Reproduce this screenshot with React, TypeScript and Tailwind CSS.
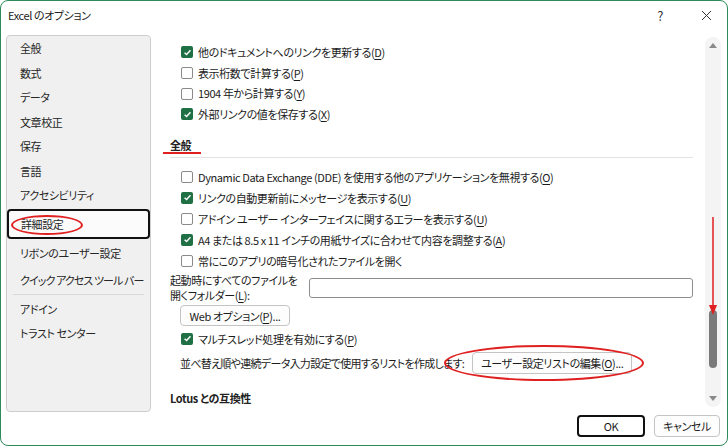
import { ReactNode } from 'react';

const font = "font-['Yu_Gothic_UI','Noto_Sans_CJK_JP',sans-serif] [font-feature-settings:'palt'] tracking-[-0.4px]";

const navTop = ['全般', '数式', 'データ', '文章校正', '保存', '言語', 'アクセシビリティ'];

function Check({ checked }: { checked?: boolean }) {
  if (checked) {
    return (
      <span className="w-[12px] h-[12px] rounded-[2px] bg-[#1f7145] flex items-center justify-center shrink-0">
        <svg width="9" height="9" viewBox="0 0 10 10">
          <path d="M1.8 5.2 L4 7.3 L8.3 2.6" stroke="white" strokeWidth="1.6" fill="none" />
        </svg>
      </span>
    );
  }
  return <span className="w-[12px] h-[12px] rounded-[2px] border border-[#8a8a8a] bg-white shrink-0" />;
}

function Row({ checked, children }: { checked?: boolean; children: ReactNode }) {
  return (
    <div className="h-[21px] flex items-center gap-[5px] pl-[11px]">
      <Check checked={checked} />
      <span className="whitespace-nowrap">{children}</span>
    </div>
  );
}

const U = ({ c }: { c: string }) => <span className="underline underline-offset-2">{c}</span>;

export default function App() {
  return (
    <div className={`w-[728px] h-[446px] bg-white border border-[#2f8a5a] rounded-[8px] overflow-hidden flex flex-col text-[11px] text-[#1b1b1b] ${font}`}>
      {/* Title bar */}
      <div className="h-[29px] flex items-center pl-[7px] shrink-0">
        <span className="text-[#222]">Excel のオプション</span>
        <span className="ml-auto mr-[38px] text-[13px] text-[#333]">?</span>
        <svg width="11" height="11" viewBox="0 0 11 11" className="mr-[15px]">
          <path d="M1 1 L10 10 M10 1 L1 10" stroke="#333" strokeWidth="1" />
        </svg>
      </div>

      <div className="flex flex-1 items-start">
        {/* Left nav */}
        <div className="ml-[5px] mt-[5px] w-[145px] h-[377px] bg-[#f0f0f0] border border-[#cdcdcd] rounded-[4px] flex flex-col text-[#262626] whitespace-nowrap relative">
          {navTop.map((n) => (
            <div key={n} className="h-[24.5px] flex items-center pl-[13px]">
              {n}
            </div>
          ))}
          <div className="h-[30px] mt-[1.5px] bg-[#fbfbfb] border-2 border-[#111] rounded-[4px] flex items-center pl-[12px] relative">
            詳細設定
            <span className="absolute left-[2px] top-[4px] w-[72px] h-[20px] border-2 border-[#e02020] rounded-[50%]" />
          </div>
          <div className="h-[28px] flex items-center pl-[13px]">リボンのユーザー設定</div>
          <div className="h-[27px] flex items-center pl-[13px] tracking-[-0.9px]">クイック アクセス ツール バー</div>
          <div className="mx-[6px] h-px bg-[#d9d9d9]" />
          <div className="h-[24px] mt-[2px] flex items-center pl-[13px]">アドイン</div>
          <div className="h-[24px] flex items-center pl-[13px]">トラスト センター</div>
        </div>

        {/* Right */}
        <div className="flex-1 flex flex-col">
          <div className="flex h-[372px] mt-[6px]">
            <div className="flex-1 pl-[19px] pr-[12px] flex flex-col pt-[6px] overflow-hidden">
              <Row checked>他のドキュメントへのリンクを更新する(<U c="D" />)</Row>
              <Row>表示桁数で計算する(<U c="P" />)</Row>
              <Row>1904 年から計算する(<U c="Y" />)</Row>
              <Row checked>外部リンクの値を保存する(<U c="X" />)</Row>

              <div className="h-[21px] mt-[10px] flex items-center relative font-bold text-[#222]">
                全般
                <span className="absolute left-[-7px] top-[17px] w-[38px] h-[2px] bg-[#e02020]" />
              </div>
              <div className="h-px bg-[#e3e3e3] mt-[2px]" />

              <div className="mt-[8px]">
                <Row>Dynamic Data Exchange (DDE) を使用する他のアプリケーションを無視する(<U c="O" />)</Row>
                <Row checked>リンクの自動更新前にメッセージを表示する(<U c="U" />)</Row>
                <Row>アドイン ユーザー インターフェイスに関するエラーを表示する(<U c="U" />)</Row>
                <Row checked>A4 または 8.5 x 11 インチの用紙サイズに合わせて内容を調整する(<U c="A" />)</Row>
                <Row>常にこのアプリの暗号化されたファイルを開く</Row>
              </div>

              <div className="h-[30px] mt-[2px] flex items-center">
                <div className="w-[139px] flex flex-col whitespace-nowrap">
                  <div className="h-[15px] leading-[15px]">起動時にすべてのファイルを</div>
                  <div className="h-[15px] leading-[15px]">
                    開くフォルダー(<U c="L" />):
                  </div>
                </div>
                <div className="flex-1 h-[20px] border border-[#8d8d8d] rounded-[3px] bg-white" />
              </div>

              <div className="mt-[2px] pl-[10px]">
                <div className="w-[110px] h-[21px] border border-[#c4c4c4] rounded-[4px] bg-[#fdfdfd] flex items-center justify-center whitespace-nowrap">
                  Web オプション(<U c="P" />)...
                </div>
              </div>

              <div className="mt-[2px]">
                <Row checked>マルチスレッド処理を有効にする(<U c="P" />)</Row>
              </div>

              <div className="h-[22px] mt-[3px] pl-[10px] flex items-center">
                <span className="whitespace-nowrap tracking-[-0.7px]">並べ替え順や連続データ入力設定で使用するリストを作成します:</span>
                <div className="ml-[8px] w-[160px] h-[22px] border border-[#c4c4c4] rounded-[4px] bg-[#fdfdfd] flex items-center justify-center relative whitespace-nowrap">
                  ユーザー設定リストの編集(<U c="O" />)...
                  <span className="absolute left-[-29px] top-[-8px] w-[200px] h-[36px] border-2 border-[#e02020] rounded-[50%]" />
                </div>
              </div>

              <div className="h-[20px] mt-[14px] flex items-center font-bold text-[#222]">Lotus との互換性</div>
            </div>

            {/* Scrollbar */}
            <div className="w-[16px] h-[370px] mt-[1px] mr-[6px] bg-[#f4f4f4] rounded-[8px] flex flex-col items-center relative">
              <svg width="8" height="6" viewBox="0 0 8 6" className="mt-[5px]">
                <path d="M0 6 L4 1 L8 6 Z" fill="#8a8a8a" />
              </svg>
              <div className="flex-1" />
              <div className="w-[8px] h-[58px] bg-[#7a7a7a] rounded-[4px] mb-[28px]" />
              <svg width="8" height="6" viewBox="0 0 8 6" className="mb-[5px]">
                <path d="M0 0 L8 0 L4 5 Z" fill="#8a8a8a" />
              </svg>
              <svg width="10" height="100" viewBox="0 0 10 100" className="absolute left-[3px] top-[180px]">
                <path d="M5 0 L5 92" stroke="#e02020" strokeWidth="1.5" />
                <path d="M1 88 L5 98 L9 88 Z" fill="#e02020" />
              </svg>
            </div>
          </div>

          {/* Footer */}
          <div className="flex justify-end gap-[9px] pr-[7px] mt-[7px]">
            <div className="w-[68px] h-[22px] border-2 border-[#111] rounded-[4px] flex items-center justify-center">OK</div>
            <div className="w-[66px] h-[22px] border border-[#c4c4c4] rounded-[4px] bg-[#fdfdfd] flex items-center justify-center">キャンセル</div>
          </div>
        </div>
      </div>
    </div>
  );
}
